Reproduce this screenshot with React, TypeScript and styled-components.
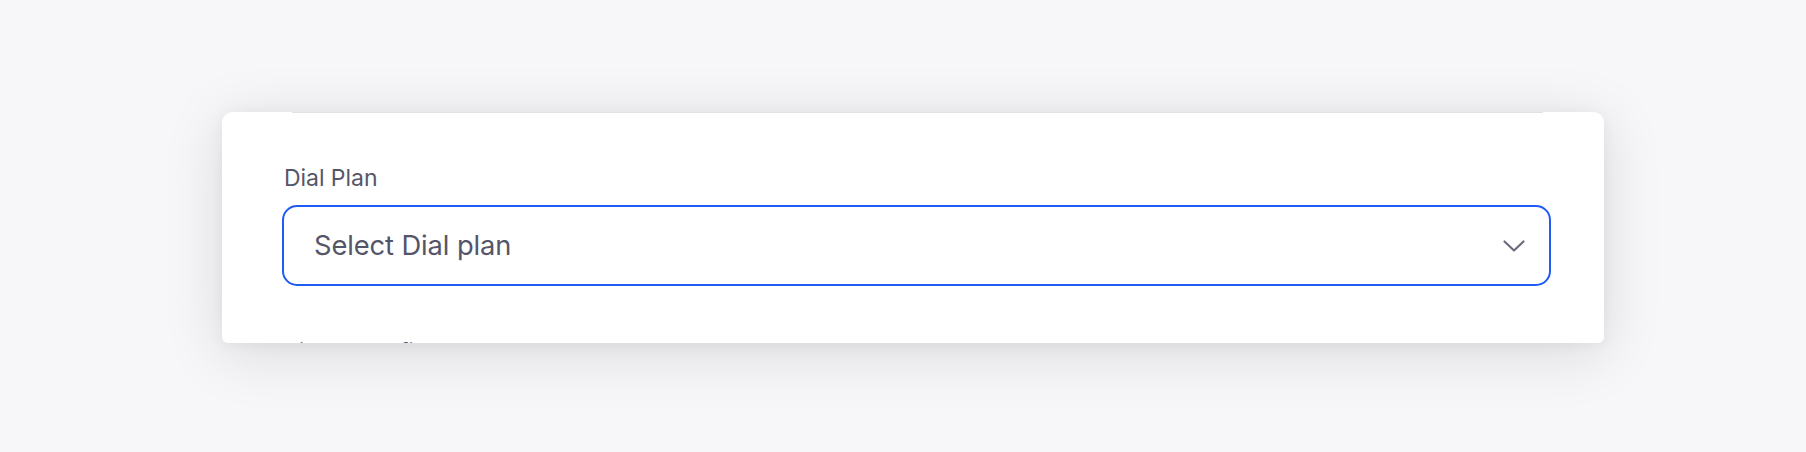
import React from "react";
import styled, { createGlobalStyle } from "styled-components";

const GlobalStyle = createGlobalStyle`
  html, body {
    margin: 0;
    padding: 0;
    background: #f7f7f9;
  }
  body {
    font-family: Inter, "Noto Sans", "Liberation Sans", sans-serif;
    -webkit-font-smoothing: antialiased;
  }
`;

const Page = styled.div`
  width: 1806px;
  height: 452px;
  box-sizing: border-box;
  padding: 112px 202px 0 222px;
  background: #f7f7f9;
  overflow: hidden;
`;

const Card = styled.div`
  width: 1382px;
  height: 231px;
  background: #ffffff;
  border-radius: 11px 11px 6px 6px;
  box-shadow: 0 10px 60px rgba(20, 20, 40, 0.13), 0 2px 14px rgba(20, 20, 40, 0.05);
  overflow: hidden;
  display: flex;
  flex-direction: column;
`;

const TopSeam = styled.div`
  height: 1px;
  flex: none;
  margin: 0 61px 0 70px;
  background: #e2e2e5;
  border-radius: 1px;
`;

const Body = styled.div`
  display: flex;
  flex-direction: column;
  gap: 54px;
  padding: 53px 53px 0 60px;
`;

const Field = styled.div`
  display: flex;
  flex-direction: column;
  gap: 15px;
`;

const Label = styled.label`
  display: block;
  padding-left: 2px;
  font-size: 23px;
  line-height: 24px;
  color: #56566a;
  font-weight: 400;
  letter-spacing: -0.05px;
`;

const SelectBox = styled.div`
  height: 81px;
  box-sizing: border-box;
  border: 2px solid #1f5bf4;
  border-radius: 15px;
  padding: 0 24px 0 30px;
  display: flex;
  align-items: center;
  justify-content: space-between;
  background: #ffffff;
`;

const Placeholder = styled.span`
  font-size: 27.3px;
  color: #55556a;
  letter-spacing: -0.1px;
`;

const Chevron = styled.svg`
  width: 22px;
  height: 12px;
  flex: none;
`;

export default function App() {
  return (
    <>
      <GlobalStyle />
      <Page>
        <Card>
          <TopSeam />
          <Body>
            <Field>
              <Label>Dial Plan</Label>
              <SelectBox>
                <Placeholder>Select Dial plan</Placeholder>
                <Chevron viewBox="0 0 22 12" fill="none">
                  <path
                    d="M1.5 1.5 L11 10.5 L20.5 1.5"
                    stroke="#6c6c7e"
                    strokeWidth="2.2"
                    strokeLinecap="round"
                    strokeLinejoin="round"
                  />
                </Chevron>
              </SelectBox>
            </Field>
            <Field>
              <Label>Pickup profile</Label>
            </Field>
          </Body>
        </Card>
      </Page>
    </>
  );
}
